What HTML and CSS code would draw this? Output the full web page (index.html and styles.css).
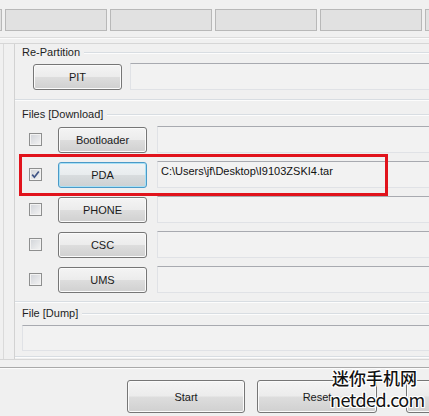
FILE: index.html
```html
<!DOCTYPE html>
<html>
<head>
<meta charset="utf-8">
<link rel="stylesheet" href="styles.css">
</head>
<body>
<div class="tabs">
  <span class="tab"></span><span class="tab"></span><span class="tab"></span><span class="tab"></span><span class="tab"></span><span class="tab"></span>
</div>
<div class="rule"></div>
<div class="frame">
  <div class="side"></div>
  <div class="content">
    <section class="group g-repart">
      <div class="legend"><span>Re-Partition</span></div>
      <div class="row pit-row">
        <button class="btn pit">PIT</button>
        <div class="field"></div>
      </div>
    </section>
    <section class="group g-files">
      <div class="legend"><span>Files [Download]</span></div>
      <div class="rows">
        <div class="row"><span class="check"></span><button class="btn">Bootloader</button><div class="field"></div></div>
        <div class="row"><span class="check checked"><svg viewBox="0 0 13 13" width="13" height="13"><path d="M3.2 6.6 L5.4 9.2 L9.8 3.4" fill="none" stroke="#3f5486" stroke-width="1.7"/></svg></span><button class="btn default">PDA</button><div class="field">C:\Users\jf\Desktop\I9103ZSKI4.tar</div></div>
        <div class="row"><span class="check"></span><button class="btn">PHONE</button><div class="field"></div></div>
        <div class="row"><span class="check"></span><button class="btn">CSC</button><div class="field"></div></div>
        <div class="row"><span class="check"></span><button class="btn">UMS</button><div class="field"></div></div>
      </div>
    </section>
    <section class="group g-dump">
      <div class="legend"><span>File [Dump]</span></div>
      <div class="field dump"></div>
    </section>
  </div>
</div>
<div class="sep"></div>
<div class="actions">
  <button class="btn big start">Start</button>
  <button class="btn big reset">Reset</button>
  <button class="btn big more"></button>
</div>
<div class="highlight"></div>
<div class="watermark">
  <div class="wm-cn">迷你手机网</div>
  <div class="wm-en">netded.com</div>
</div>
</body>
</html>
```
FILE: styles.css
```css
html, body {
  margin: 0;
  padding: 0;
}
body {
  width: 429px;
  height: 416px;
  overflow: hidden;
  background: #f0f0f0;
  font-family: "Liberation Sans", Arial, sans-serif;
  font-size: 11px;
  color: #1e1e1e;
  position: relative;
}
.tabs {
  display: flex;
  gap: 3px;
  padding-top: 9px;
  margin-left: -100px;
  height: 22px;
}
.tab {
  flex: 0 0 100px;
  height: 20px;
  border: 1px solid #b8b8b8;
  background: #e1e1e1;
}
.rule {
  margin-top: 6px;
  border-top: 1px solid #dcdcdc;
  border-bottom: 1px solid #fbfbfb;
}
.frame {
  margin-top: 4px;
  border-top: 1px solid #d6d6d6;
  display: flex;
  height: 315px;
  border-bottom: 1px solid #d6d6d6;
}
.side {
  margin-left: 3px;
  width: 10px;
  border-left: 1px solid #dadada;
  border-right: 1px solid #d2d2d2;
}
.content {
  flex: 1;
  min-width: 0;
}
.group {
  border-bottom: 1px solid #d8dde2;
  box-shadow: 0 1px 0 #fcfcfc;
  padding-left: 7px;
}
.legend {
  display: flex;
  align-items: center;
  height: 13px;
  line-height: 13px;
}
.legend::after {
  content: "";
  flex: 1;
  height: 0;
  border-top: 1px solid #d8dde2;
  border-bottom: 1px solid #fcfcfc;
  margin-left: 4px;
}
.g-repart {
  padding-top: 2px;
  padding-bottom: 9px;
}
.g-files {
  margin-top: 8px;
  padding-bottom: 8px;
}
.g-dump {
  margin-top: 5px;
  padding-bottom: 5px;
}
.row {
  display: flex;
  align-items: flex-start;
  height: 27px;
}
.pit-row {
  margin-top: 4px;
}
.rows {
  margin-top: 5px;
  display: flex;
  flex-direction: column;
  gap: 8px;
}
.btn {
  font-family: "Liberation Sans", Arial, sans-serif;
  font-size: 11px;
  color: #1a1a1a;
  width: 89px;
  height: 26px;
  margin-top: 1px;
  padding: 0;
  border: 1px solid #767676;
  border-radius: 3px;
  background: linear-gradient(#f4f4f4 0%, #ececec 48%, #dddddd 52%, #d0d0d0 100%);
  box-shadow: inset 0 0 0 1px #fbfbfb;
  flex: none;
}
.btn.pit {
  margin-left: 11px;
}
.btn.default {
  border-color: #4a9ac8;
  box-shadow: inset 0 0 0 1px #a8e0f5;
  background: linear-gradient(#f0f4f6 0%, #e8ecee 48%, #d8dcde 52%, #ccd0d2 100%);
}
.check {
  flex: none;
  width: 11px;
  height: 11px;
  align-self: center;
  margin-left: 7px;
  margin-right: 16px;
  border: 1px solid #8e8f8f;
  background: linear-gradient(135deg, #d0d3d8, #f4f4f4);
  box-shadow: inset 0 0 0 1px #f2f2f2;
  position: relative;
}
.check svg {
  position: absolute;
  left: -1px;
  top: -1px;
}
.field {
  flex: 1;
  margin-left: 10px;
  margin-right: -30px;
  border: 1px solid #e0e2e6;
  border-top-color: #a8aab0;
  background: #f2f2f2;
  padding: 3px 0 0 3px;
  box-sizing: border-box;
  height: 27px;
  line-height: 13px;
  white-space: nowrap;
  color: #111;
}
.pit-row .field {
  margin-left: 8px;
}
.field.dump {
  margin-left: 0;
  margin-top: 5px;
  height: 26px;
}
.sep {
  margin-top: 7px;
  border-top: 1px solid #a9a9a9;
  border-bottom: 1px solid #fbfbfb;
}
.actions {
  display: flex;
  margin-top: 11px;
  padding-left: 127px;
}
.btn.big {
  height: 33px;
  margin-top: 0;
  font-size: 11px;
}
.btn.start { width: 118px; }
.btn.reset { width: 120px; margin-left: 12px; }
.btn.more { width: 60px; margin-left: 29px; }
.highlight {
  position: absolute;
  left: 19px;
  top: 154px;
  width: 363px;
  height: 36px;
  border: 3px solid #e1131c;
}
.watermark {
  position: absolute;
  left: 330px;
  top: 368px;
  font-family: "Noto Sans CJK SC", sans-serif;
  color: #111;
  white-space: nowrap;
  text-shadow: 1px 0 0 #fff, -1px 0 0 #fff, 0 1px 0 #fff, 0 -1px 0 #fff, 1px 1px 0 #fff, -1px -1px 0 #fff, 1px -1px 0 #fff, -1px 1px 0 #fff;
}
.wm-cn {
  font-size: 17px;
  font-weight: 500;
  line-height: 20px;
  padding-left: 2px;
}
.wm-en {
  font-size: 18px;
  line-height: 22px;
  letter-spacing: -0.6px;
}
```
